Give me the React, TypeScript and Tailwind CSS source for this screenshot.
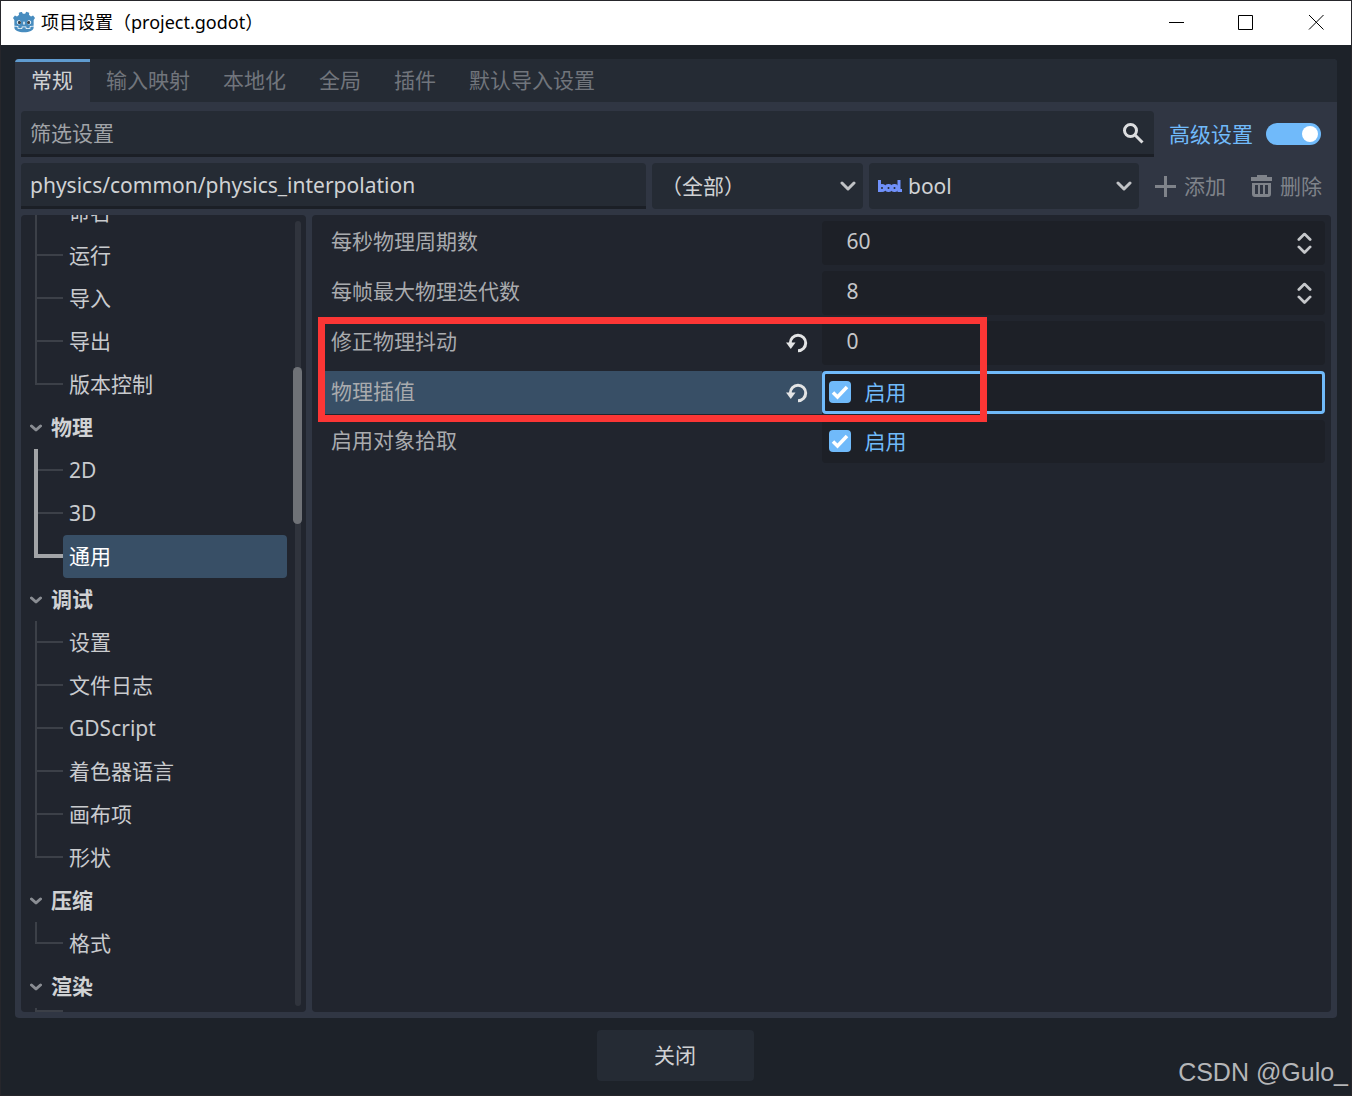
import { useState, type ReactNode } from "react";
import { SiGodotengine } from "react-icons/si";

const TABS = ["常规", "输入映射", "本地化", "全局", "插件", "默认导入设置"];

type TreeNode = { label: string; kind: "group" | "item"; last?: boolean; active?: boolean; selected?: boolean };

const TREE: TreeNode[] = [
  { label: "命名", kind: "item" },
  { label: "运行", kind: "item" },
  { label: "导入", kind: "item" },
  { label: "导出", kind: "item" },
  { label: "版本控制", kind: "item", last: true },
  { label: "物理", kind: "group" },
  { label: "2D", kind: "item", active: true },
  { label: "3D", kind: "item", active: true },
  { label: "通用", kind: "item", last: true, active: true, selected: true },
  { label: "调试", kind: "group" },
  { label: "设置", kind: "item" },
  { label: "文件日志", kind: "item" },
  { label: "GDScript", kind: "item" },
  { label: "着色器语言", kind: "item" },
  { label: "画布项", kind: "item" },
  { label: "形状", kind: "item", last: true },
  { label: "压缩", kind: "group" },
  { label: "格式", kind: "item", last: true },
  { label: "渲染", kind: "group" },
];

function Chevron({ className }: { className?: string }) {
  return (
    <svg viewBox="0 0 16 10" fill="none" stroke="currentColor" strokeWidth="3" strokeLinecap="round" strokeLinejoin="round" className={className}>
      <path d="M2 2l6 6 6-6" />
    </svg>
  );
}

function TreeArrow() {
  return (
    <svg viewBox="0 0 12 8" fill="none" stroke="#8a8d93" strokeWidth="3" strokeLinecap="round" strokeLinejoin="round" className="h-2 w-3">
      <path d="M1.500 2L6 6l4.500-4" />
    </svg>
  );
}

function SearchIcon() {
  return (
    <svg viewBox="0 0 22 22" fill="none" stroke="#dcdddf" strokeWidth="3" className="size-[22px]">
      <circle cx="8.500" cy="8.500" r="6" />
      <path d="M12.500 12.500l8 8" />
    </svg>
  );
}

function PlusIcon() {
  return (
    <svg viewBox="0 0 21 21" fill="none" stroke="currentColor" strokeWidth="3" className="size-[21px]">
      <path d="M10.500 0v21M0 10.500h21" />
    </svg>
  );
}

function TrashIcon() {
  return (
    <svg viewBox="0 0 22 22" fill="currentColor" fillRule="evenodd" className="size-[22px]">
      <path d="M6 0h10v2h5v4H0V2h6zM1 8h19v11a3 3 0 0 1-3 3H4a3 3 0 0 1-3-3zm3 2v9h3v-9zm5 0v9h3v-9zm5 0v9h3v-9z" />
    </svg>
  );
}

function ReloadIcon() {
  return (
    <svg viewBox="0 0 22 22" className="size-[22px]">
      <path d="M4.300 11a7.700 7.700 0 1 1 7.700 7.700" fill="none" stroke="#e3e4e5" strokeWidth="3" />
      <path d="M0 10.500h9.500L4.800 17z" fill="#e3e4e5" />
    </svg>
  );
}

function BoolIcon() {
  return (
    <svg viewBox="0 0 24 13" fill="none" stroke="#7091fb" strokeWidth="3" className="h-[13px] w-6">
      <line x1="1.500" y1="0" x2="1.500" y2="12" />
      <circle cx="4" cy="8" r="2.500" />
      <circle cx="10.500" cy="8" r="2.500" />
      <circle cx="16.500" cy="8" r="2.500" />
      <line x1="21" y1="0" x2="21" y2="12" />
      <line x1="21" y1="10.500" x2="24" y2="10.500" />
    </svg>
  );
}

function WindowButton({ label, children }: { label: string; children: ReactNode }) {
  return (
    <button aria-label={label} className="flex h-full w-[70px] items-center justify-center text-black">
      <svg viewBox="0 0 16 16" fill="none" stroke="currentColor" strokeWidth="1" className="size-4">
        {children}
      </svg>
    </button>
  );
}

function TitleBar() {
  return (
    <header className="flex h-11 shrink-0 items-center bg-white pb-0.5 pl-3">
      <span className="relative">
        <SiGodotengine className="size-[22px] text-[#478cbf]" />
        <i className="absolute top-[10px] left-[5px] size-[3px] rounded-full bg-[#414042]" />
        <i className="absolute top-[10px] right-[5px] size-[3px] rounded-full bg-[#414042]" />
      </span>
      <h1 className="ml-1.5 flex-1 text-[18px] leading-6 text-black">项目设置（project.godot）</h1>
      <WindowButton label="最小化">
        <path d="M1 8.500h15" />
      </WindowButton>
      <WindowButton label="最大化">
        <path d="M0.500 1.500h14v14h-14z" />
      </WindowButton>
      <WindowButton label="关闭窗口">
        <path d="M1 1l14.500 14.500M15.500 1L1 15.500" />
      </WindowButton>
    </header>
  );
}

function TreeRow({ node }: { node: TreeNode }) {
  if (node.kind === "group") {
    return (
      <li className="flex h-[43px] items-center pl-[9px] font-bold text-[#d0d2d4]">
        <TreeArrow />
        <span className="ml-[9px] pb-0.5">{node.label}</span>
      </li>
    );
  }
  const trunk = node.active
    ? node.last
      ? "h-[23px] w-[29px] border-l-4 border-b-4 border-[#a2a4a7] ml-[13px]"
      : "h-[43px] w-[29px] border-l-4 border-[#a2a4a7] ml-[13px]"
    : node.last
      ? "h-[22px] w-7 border-l-2 border-b-2 border-[#3c4048] ml-3.5"
      : "h-[43px] w-7 border-l-2 border-[#3c4048] ml-3.5";
  return (
    <li className="flex h-[43px]">
      <span className={trunk}>{!node.last && <span className="mt-5 block h-0.5 bg-[#3c4048]" />}</span>
      <button
        className={
          node.selected
            ? "flex-1 rounded-[4px] bg-[#384f66] pb-0.5 pl-1.5 text-left text-white"
            : "flex-1 pb-0.5 pl-1.5 text-left text-[#c9cbce]"
        }
      >
        {node.label}
      </button>
    </li>
  );
}

function Sidebar() {
  return (
    <nav aria-label="设置分类" className="flex w-[285px] shrink-0 overflow-hidden rounded-[4px] bg-[#21252e] pr-1">
      <div className="mr-1.5 min-h-0 flex-1 overflow-hidden">
        <ul className="-mt-6">
          {TREE.map((n) => (
            <TreeRow key={n.label} node={n} />
          ))}
          <li className="ml-3.5 h-1 w-7 border-b-2 border-l-2 border-[#3c4048]" />
        </ul>
      </div>
      <div className="relative my-1.5 flex w-[9px] justify-center">
        <div className="w-1.5 rounded-full bg-[#30343d]" />
        <div className="absolute top-[146px] h-[157px] w-[9px] rounded-full bg-[#6f7277]" />
      </div>
    </nav>
  );
}

function PropertyRow({ id, label, revert, highlight, children }: { id: string; label: string; revert?: boolean; highlight?: boolean; children: ReactNode }) {
  return (
    <div className="grid grid-cols-2">
      <div className={highlight ? "flex items-center bg-[#384f66] pr-3.5 pl-[13px]" : "flex items-center pr-3.5 pl-[13px]"}>
        <label htmlFor={id} className="flex-1 pb-1 text-[#a9abae]">
          {label}
        </label>
        {revert && (
          <button aria-label={"重置" + label}>
            <ReloadIcon />
          </button>
        )}
      </div>
      {children}
    </div>
  );
}

function NumberField({ id, value, stepper }: { id: string; value: string; stepper?: boolean }) {
  return (
    <div className="flex h-11 items-center rounded-[4px] bg-[#1d2027] pr-[13px] pl-[25px]">
      <input id={id} defaultValue={value} inputMode="numeric" className="min-w-0 flex-1 bg-transparent pb-1 text-[#c5c7ca] outline-none" />
      {stepper && (
        <span className="flex flex-col gap-1 text-[#c5c7ca]">
          <button aria-label="增加">
            <Chevron className="w-[15px] rotate-180" />
          </button>
          <button aria-label="减少">
            <Chevron className="w-[15px]" />
          </button>
        </span>
      )}
    </div>
  );
}

function CheckField({ id, focused }: { id: string; focused?: boolean }) {
  return (
    <div
      className={
        focused
          ? "flex h-[43px] items-center rounded-[4px] border-[3px] border-[#70bafa] bg-[#1d2027] pb-0.5 pl-1"
          : "flex h-[43px] items-center rounded-[4px] bg-[#1d2027] pb-0.5 pl-[7px]"
      }
    >
      <span className="relative size-[22px]">
        <input id={id} type="checkbox" defaultChecked className="block size-[22px] appearance-none rounded-[4px] bg-[#70bafa]" />
        <svg viewBox="0 0 22 22" fill="none" stroke="white" strokeWidth="3.500" className="pointer-events-none absolute inset-0 size-[22px]">
          <path d="M4 11.500l4.500 4.500L18 6" />
        </svg>
      </span>
      <label htmlFor={id} className="ml-3.5 text-[#70bafa]">
        启用
      </label>
    </div>
  );
}

function Inspector() {
  return (
    <section className="relative flex min-w-0 flex-1 flex-col gap-1.5 rounded-[4px] bg-[#21252e] p-1.5">
      <PropertyRow id="ticks" label="每秒物理周期数">
        <NumberField id="ticks" value="60" stepper />
      </PropertyRow>
      <PropertyRow id="steps" label="每帧最大物理迭代数">
        <NumberField id="steps" value="8" stepper />
      </PropertyRow>
      <PropertyRow id="jitter" label="修正物理抖动" revert>
        <NumberField id="jitter" value="0" />
      </PropertyRow>
      <PropertyRow id="interp" label="物理插值" revert highlight>
        <CheckField id="interp" focused />
      </PropertyRow>
      <PropertyRow id="picking" label="启用对象拾取">
        <CheckField id="picking" />
      </PropertyRow>
      <div className="pointer-events-none absolute top-[102px] left-1.5 h-[105px] w-[669px] border-[7px] border-[#fc3635]" />
    </section>
  );
}

const FIELD = "h-[46px] rounded-[4px] bg-[#252b34] text-[#d0d2d4] outline-none";

export default function App() {
  const [tab, setTab] = useState(0);
  return (
    <div className="relative flex h-screen flex-col border border-[#26262b] bg-[#1d2229] font-['Noto_Sans','Noto_Sans_CJK_SC',sans-serif] text-[21px] leading-[30px]">
      <TitleBar />
      <main className="mx-3.5 mt-3.5 flex min-h-0 flex-1 flex-col overflow-hidden rounded-[4px] bg-[#303643]">
        <div role="tablist" className="flex h-[43px] shrink-0 bg-[#252b34]">
          {TABS.map((name, i) => (
            <button
              key={name}
              role="tab"
              aria-selected={i === tab}
              onClick={() => setTab(i)}
              className={
                i === tab
                  ? "border-t-[3px] border-[#5f9bd0] bg-[#303643] pr-[17px] pb-[5px] pl-4 text-[#d0d2d4]"
                  : "pr-[17px] pb-0.5 pl-4 text-[#71757c]"
              }
            >
              {name}
            </button>
          ))}
        </div>

        <div className="flex min-h-0 flex-1 flex-col gap-1.5 px-1.5 pt-[9px] pb-1.5">
          <div className="flex items-center">
            <div className="flex h-[46px] flex-1 items-center rounded-t-[4px] border-b-[3px] border-[#1b1f26] bg-[#252b34] pr-2.5 pl-[9px]">
              <input aria-label="筛选设置" placeholder="筛选设置" className="min-w-0 flex-1 bg-transparent text-[#d0d2d4] outline-none placeholder:text-[#a0a3a7]" />
              <SearchIcon />
            </div>
            <label htmlFor="advanced" className="ml-[15px] text-[#70bafa]">
              高级设置
            </label>
            <span className="relative mr-2.5 ml-[13px] h-[22px] w-[55px]">
              <input id="advanced" type="checkbox" role="switch" defaultChecked className="block h-[22px] w-[55px] appearance-none rounded-full bg-[#70bafa]" />
              <span className="pointer-events-none absolute top-[3px] right-[3px] size-4 rounded-full bg-white" />
            </span>
          </div>

          <div className="flex gap-1.5">
            <input
              aria-label="设置名称"
              defaultValue="physics/common/physics_interpolation"
              className="h-[46px] min-w-0 flex-1 rounded-t-[4px] border-b-[3px] border-[#1b1f26] bg-[#252b34] pl-[9px] text-[#d0d2d4] outline-none"
            />
            <div className="relative">
              <select aria-label="功能" className={FIELD + " w-[211px] appearance-none pl-[9px]"}>
                <option>（全部）</option>
              </select>
              <Chevron className="pointer-events-none absolute top-[18px] right-[7px] w-4 text-[#c0c2c5]" />
            </div>
            <div className="relative">
              <select aria-label="类型" className={FIELD + " w-[270px] appearance-none pl-[39px]"}>
                <option>bool</option>
              </select>
              <span className="pointer-events-none absolute top-[17px] left-[9px]">
                <BoolIcon />
              </span>
              <Chevron className="pointer-events-none absolute top-[18px] right-[7px] w-4 text-[#c0c2c5]" />
            </div>
            <button disabled className="flex items-center gap-2 pr-[9px] pl-2.5 text-[#7f838a]">
              <PlusIcon />
              添加
            </button>
            <button disabled className="flex items-center gap-[7px] pr-[9px] pl-2.5 text-[#7f838a]">
              <TrashIcon />
              删除
            </button>
          </div>

          <div className="flex min-h-0 flex-1 gap-1.5">
            <Sidebar />
            <Inspector />
          </div>
        </div>
      </main>
      <footer className="flex shrink-0 justify-center pt-3 pr-0.5 pb-3.5">
        <button className="h-[51px] w-[157px] rounded-[4px] bg-[#252b34] pb-0.5 text-[#d0d2d4]">关闭</button>
      </footer>
      <p className="absolute right-[3px] bottom-2 font-['Liberation_Sans',sans-serif] text-[25px] text-[#b5b6b8]">CSDN @Gulo_</p>
    </div>
  );
}
